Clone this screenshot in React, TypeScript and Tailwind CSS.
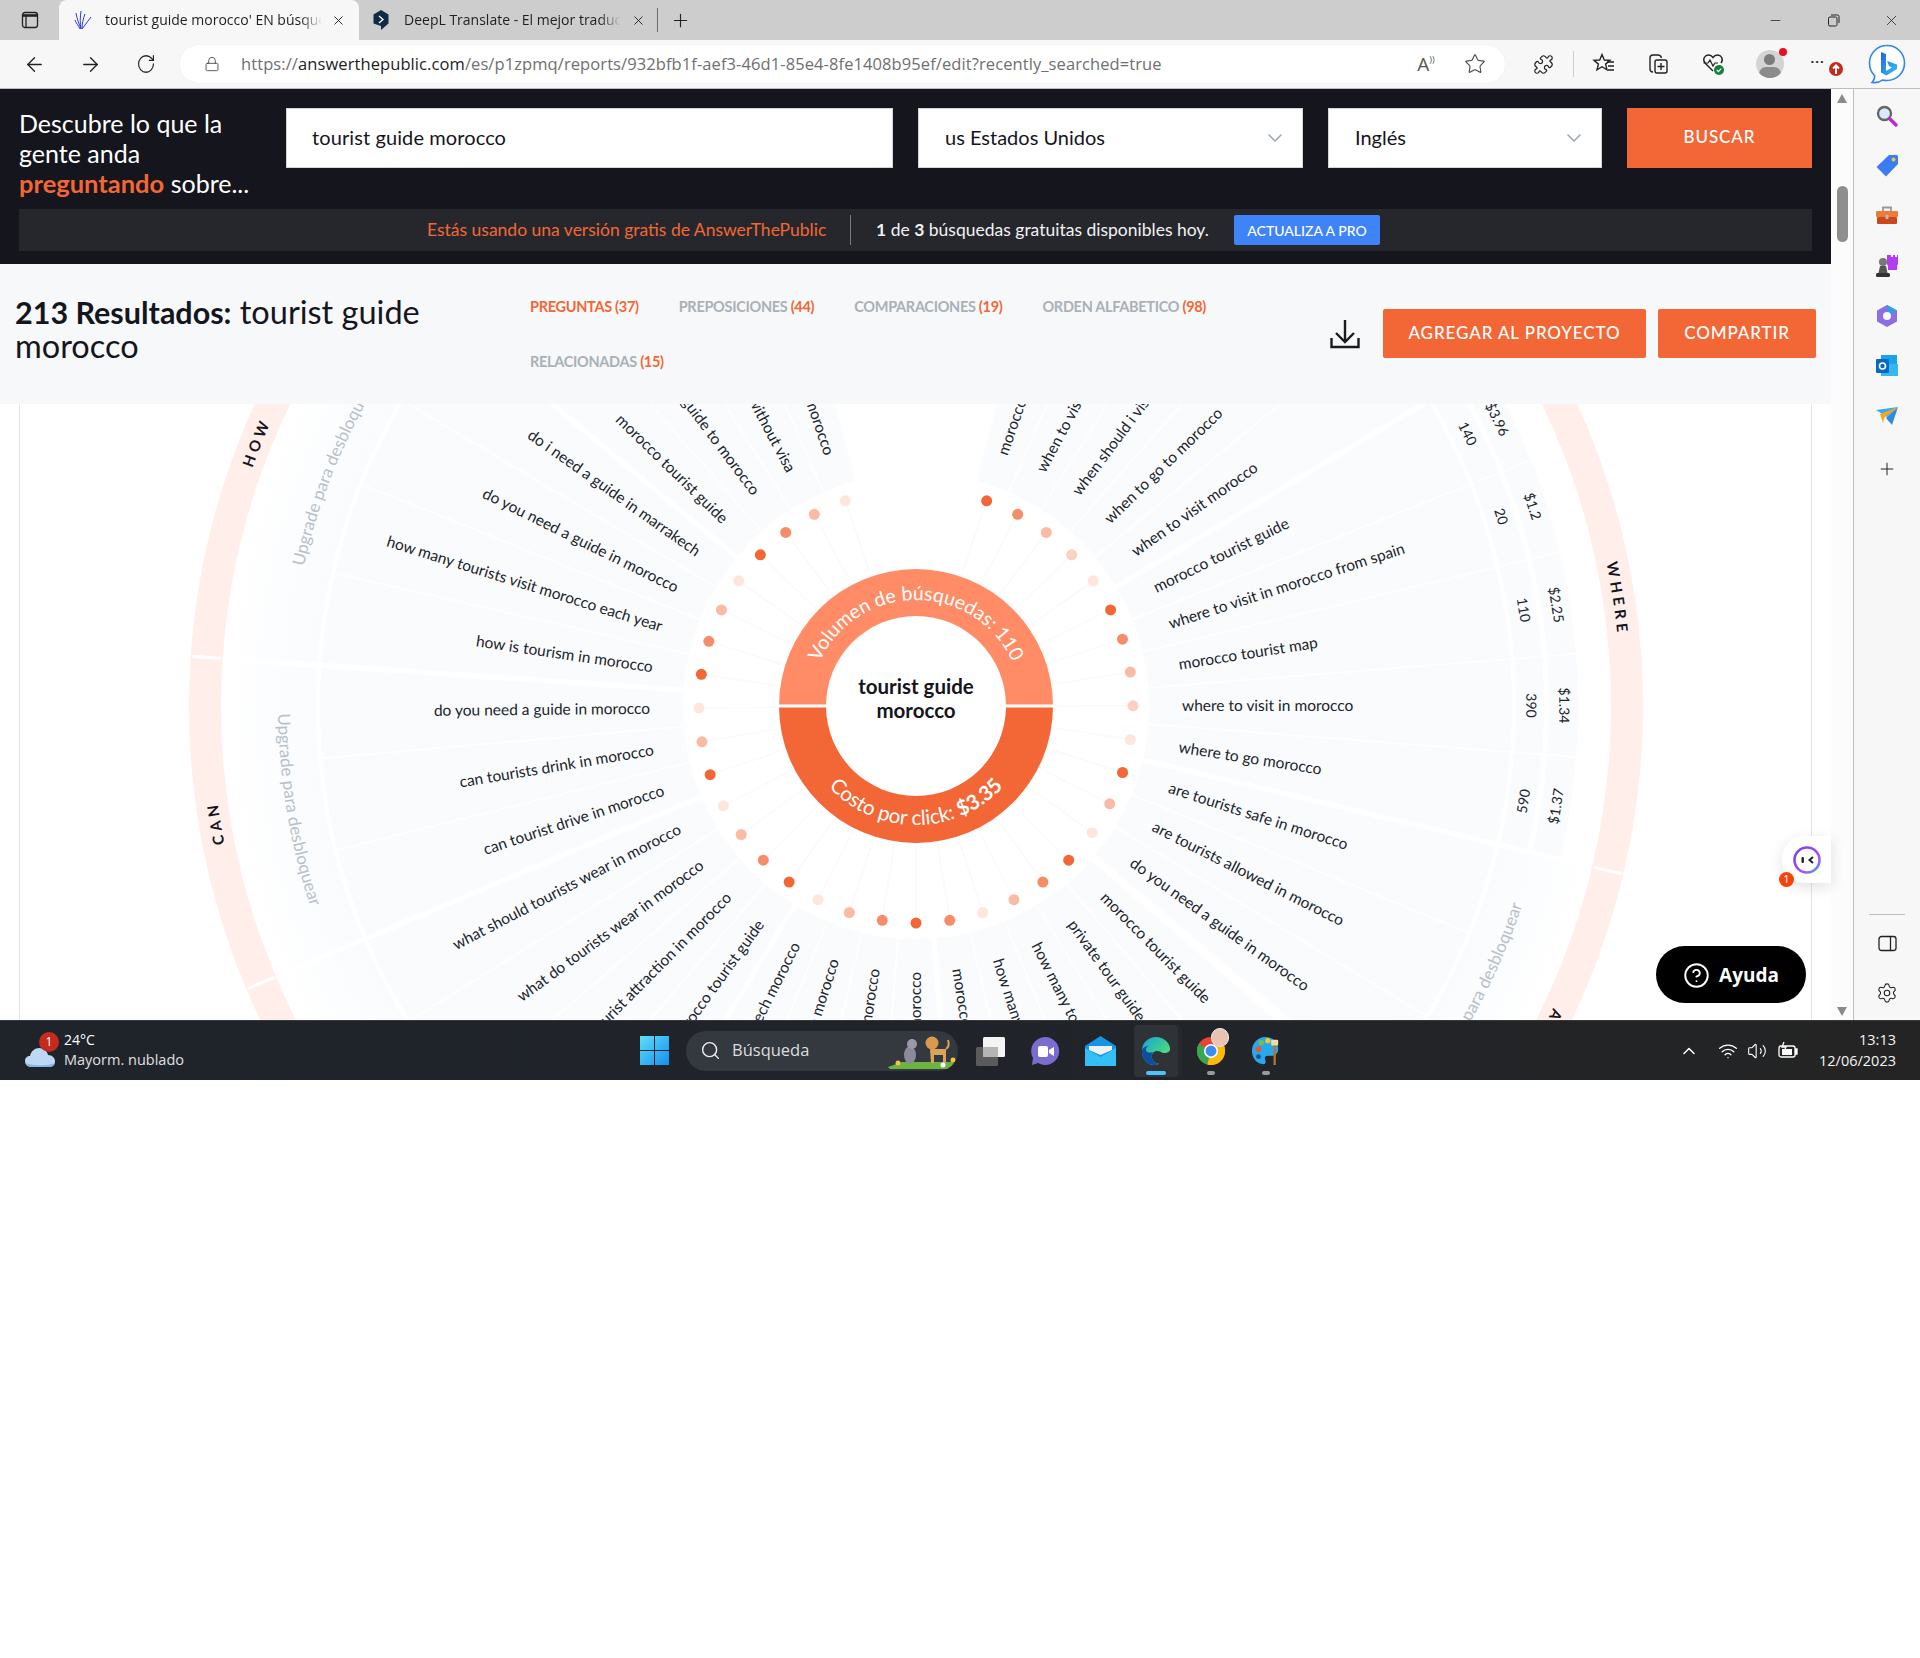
import React from "react";
import { ArrowLeft, ArrowRight, RotateCw, Lock, Star, Puzzle, Plus, Minus, X, ChevronDown, ChevronUp, Search, Settings, Wifi, Volume2, CircleHelp } from "lucide-react";

const CX = 916;
const CY = 706;
const STEP = 322 / 36;
const ang = (i: number) => 19 + i * STEP + (i >= 6 && i <= 12 ? -0.6 : 0);
const pt = (r: number, a: number): [number, number] => {
  const t = (a * Math.PI) / 180;
  return [CX + r * Math.sin(t), CY - r * Math.cos(t)];
};
const sector = (r0: number, r1: number, a0: number, a1: number) => {
  const [x0, y0] = pt(r1, a0);
  const [x1, y1] = pt(r1, a1);
  const [x2, y2] = pt(r0, a1);
  const [x3, y3] = pt(r0, a0);
  const l = a1 - a0 > 180 ? 1 : 0;
  return `M${x0} ${y0}A${r1} ${r1} 0 ${l} 1 ${x1} ${y1}L${x2} ${y2}A${r0} ${r0} 0 ${l} 0 ${x3} ${y3}Z`;
};
const arc = (r: number, a0: number, a1: number) => {
  const [x0, y0] = pt(r, a0);
  const [x1, y1] = pt(r, a1);
  const sweep = a1 > a0 ? 1 : 0;
  const l = Math.abs(a1 - a0) > 180 ? 1 : 0;
  return `M${x0} ${y0}A${r} ${r} 0 ${l} ${sweep} ${x1} ${y1}`;
};

const S = "#f26735";
const M = "#f68d69";
const L = "#fbbaa4";
const LL = "#fdd0c1";
const V = "#fee6dd";
const dotColors = [S, M, L, LL, V, S, M, L, LL, V, S, L, V, S, M, L, V, M, S, M, L, V, S, M, L, V, S, L, V, S, M, L, V, S, M, L, V];
const questions = [
  "morocco tourist guide", "when to visit morocco in", "when should i visit morocco", "when to go to morocco", "when to visit morocco",
  "morocco tourist guide", "where to visit in morocco from spain", "morocco tourist map", "where to visit in morocco", "where to go morocco",
  "are tourists safe in morocco", "are tourists allowed in morocco", "do you need a guide in morocco",
  "morocco tourist guide", "private tour guide morocco", "how many tourists visit morocco", "how many tourists go to morocco", "morocco tourist",
  "tour guide morocco", "guide in morocco", "tourist guide morocco", "guide in marrakech morocco",
  "morocco tourist guide", "tourist attraction in morocco", "what do tourists wear in morocco", "what should tourists wear in morocco",
  "can tourist drive in morocco", "can tourists drink in morocco", "do you need a guide in morocco",
  "how is tourism in morocco", "how many tourists visit morocco each year", "do you need a guide in morocco", "do i need a guide in marrakech",
  "morocco tourist guide", "tourist guide to morocco", "travel to morocco without visa", "tourist guide morocco",
];
const groups: [number, number][] = [[0, 4], [5, 9], [10, 12], [13, 17], [18, 21], [22, 25], [26, 28], [29, 32], [33, 36]];
const cells: Record<number, [string, string]> = { 5: ["140", "$3.96"], 6: ["20", "$1.2"], 7: ["110", "$2.25"], 8: ["390", "$1.34"], 9: ["590", "$1.37"] };
const ringLabels: [string, number][] = [["WHERE", 81.3], ["ARE", 117], ["HOW", 291.8], ["CAN", 260.5]];
const upgrades: [number, boolean][] = [[117, true], [260.5, true], [291.8, false]];

function Wheel() {
  const edge = (g: [number, number]): [number, number] => [ang(g[0]) - STEP / 2, ang(g[1]) + STEP / 2];
  return (
    <svg viewBox="20 404 1791 616" className="block w-full h-full font-['Lato',sans-serif]">
      <defs>
        <radialGradient id="fade" gradientUnits="userSpaceOnUse" cx={CX} cy={CY} r={690}>
          <stop offset="0.86" stopColor="#f9fbfd" />
          <stop offset="0.94" stopColor="#fcfdfe" />
          <stop offset="1" stopColor="#ffffff" />
        </radialGradient>
      </defs>
      {groups.map((g, k) => {
        const [a0, a1] = edge(g);
        return (
          <g key={k}>
            <path d={sector(695, 727, a0, a1)} fill="#ffeee9" />
            <path d={sector(233, 596, a0, a1)} fill="#f9fbfd" />
            {k === 1 ? (
              <g>
                <path d={sector(600, 628, a0, a1)} fill="#f9fbfd" />
                <path d={sector(633, 662, a0, a1)} fill="#f9fbfd" />
              </g>
            ) : (
              <path d={sector(600, 690, a0, a1)} fill="url(#fade)" />
            )}
          </g>
        );
      })}
      {questions.map((_, i) => {
        if (i === 36) return null;
        const a = ang(i) + STEP / 2;
        const [x0, y0] = pt(233, a);
        const [x1, y1] = pt(i >= 5 && i <= 8 ? 662 : 596, a);
        return <line key={i} x1={x0} y1={y0} x2={x1} y2={y1} stroke="#ffffff" strokeWidth={1.5} />;
      })}
      {groups.map((g, k) => {
        const [a0, a1] = edge(g);
        return (
          <g key={k}>
            {[a0, a1].map((a, j) => {
              const [x0, y0] = pt(233, a);
              const [x1, y1] = pt(690, a);
              const [x2, y2] = pt(698, a);
              const [x3, y3] = pt(724, a);
              return (
                <g key={j}>
                  <line x1={x0} y1={y0} x2={x1} y2={y1} stroke="#ffffff" strokeWidth={5} />
                  <line x1={x2} y1={y2} x2={x3} y2={y3} stroke="#ffffff" strokeWidth={3} strokeLinecap="round" />
                </g>
              );
            })}
          </g>
        );
      })}
      {questions.map((q, i) => {
        const a = ang(i);
        const right = a < 179.9;
        const [x0, y0] = pt(137, a);
        const [x1, y1] = pt(217, a);
        const [tx, ty] = pt(266, a);
        return (
          <g key={i}>
            <line x1={x0} y1={y0} x2={x1} y2={y1} stroke="#fafafb" strokeWidth={1.5} />
            <circle cx={x1} cy={y1} r={5.5} fill={dotColors[i]} />
            <text
              x={tx}
              y={ty}
              dy="0.34em"
              textAnchor={right ? "start" : "end"}
              transform={`rotate(${right ? a - 90 : a + 90} ${tx} ${ty})`}
              fontSize={15.5}
              fill="#20232a"
            >
              {q}
            </text>
          </g>
        );
      })}
      {Object.keys(cells).map((k) => {
        const i = Number(k);
        const a = ang(i);
        const rot = a <= 90.5 ? a : a - 180;
        const [x0, y0] = pt(615, a);
        const [x1, y1] = pt(648, a);
        return (
          <g key={k} fontSize={14} fill="#20232a" textAnchor="middle">
            <text x={x0} y={y0} dy="0.34em" transform={`rotate(${rot} ${x0} ${y0})`}>{cells[i][0]}</text>
            <text x={x1} y={y1} dy="0.34em" transform={`rotate(${rot} ${x1} ${y1})`}>{cells[i][1]}</text>
          </g>
        );
      })}
      {ringLabels.map(([t, a], k) => {
        const d = arc(705, a - 12, a + 12);
        return (
          <g key={k}>
            <path id={`rl${k}`} d={d} fill="none" />
            <text fontSize={15} fontWeight={700} letterSpacing="4" fill="#14151d" textAnchor="middle">
              <textPath href={`#rl${k}`} startOffset="50%">{t}</textPath>
            </text>
          </g>
        );
      })}
      {upgrades.map(([a, ccw], k) => {
        const d = ccw ? arc(638, a + 14, a - 14) : arc(628, a - 14, a + 14);
        return (
          <g key={k}>
            <path id={`up${k}`} d={d} fill="none" />
            <text fontSize={17} fill="#b6c0c9" textAnchor="middle">
              <textPath href={`#up${k}`} startOffset="50%">Upgrade para desbloquear</textPath>
            </text>
          </g>
        );
      })}
      <path d={sector(90, 137, -90, 90)} fill="#ff8c66" />
      <path d={sector(90, 137, 90, 270)} fill="#f26735" />
      <rect x={CX - 140} y={CY - 1.5} width={280} height={3} fill="#ffffff" />
      <path id="hubTop" d={arc(106, -80, 80)} fill="none" />
      <text fontSize={19.5} fill="#ffffff" textAnchor="middle">
        <textPath href="#hubTop" startOffset="50%">Volumen de búsquedas: 110</textPath>
      </text>
      <path id="hubBot" d={arc(119, 260, 100)} fill="none" />
      <text fontSize={20.5} fill="#ffffff" textAnchor="middle">
        <textPath href="#hubBot" startOffset="50%">Costo por click: <tspan fontWeight={700}>$3.35</tspan></textPath>
      </text>
      <text x={CX} y={694} textAnchor="middle" fontSize={20.5} fontWeight={700} fill="#14151d">tourist guide</text>
      <text x={CX} y={718} textAnchor="middle" fontSize={20.5} fontWeight={700} fill="#14151d">morocco</text>
    </svg>
  );
}

function Bing() {
  return (
    <svg width="38" height="40" viewBox="0 0 38 40">
      <defs>
        <linearGradient id="bg" x1="0" y1="0" x2="1" y2="1">
          <stop offset="0" stopColor="#1b66e0" />
          <stop offset="1" stopColor="#37c6e8" />
        </linearGradient>
      </defs>
      <path d="M19 1.5C9 1.5 1.5 9.5 1.5 19c0 5 2 9.5 5 12.5.5 2.5-.5 5-2.500 7 4 .5 8-.5 10.500-2.500 1.500.5 3 .5 4.500.5 10 0 17.500-8 17.500-17.500S29 1.500 19 1.500z" fill="#fff" stroke="#2f86e8" strokeWidth="1.6" />
      <path d="M13 8l5 2v17l6-3.500-3-1.500-2-5 10 3.500v4.500l-10.500 6.500L13 28.500z" fill="url(#bg)" />
    </svg>
  );
}

function Edge({ size = 30 }: { size?: number }) {
  return (
    <svg width={size} height={size} viewBox="0 0 32 32">
      <defs>
        <linearGradient id="eg" x1="0" y1="0" x2="1" y2="1">
          <stop offset="0" stopColor="#1ba1e2" />
          <stop offset="0.55" stopColor="#3bcf8e" />
          <stop offset="1" stopColor="#8ee36b" />
        </linearGradient>
      </defs>
      <path d="M16 1C7 1 1 8 1 16c0 8 5.500 15 13 15 2 0 4-.5 5.500-1.500-4 0-8-3-8-7.500 0-3.500 2.500-6 5.500-6 3.500 0 5 1.500 6.500 2 2 .5 7.500-.5 7.500-4C31 7 24 1 16 1z" fill="url(#eg)" />
      <path d="M1 16c0 8 5.500 15 13 15 2 0 4-.5 5.500-1.500-4 0-8-3-8-7.500 0-2.500 1-4 2.500-5-1 .5-4 1-6 .5C5 16.500 4 13 8 10c-4 1-7 3-7 6z" fill="#0b4f9e" />
    </svg>
  );
}

function Chrome() {
  return (
    <svg width="30" height="30" viewBox="0 0 32 32">
      <circle cx="16" cy="16" r="15" fill="#ea4335" />
      <path d="M16 16L3 8.500A15 15 0 0 0 12 30.500z" fill="#34a853" />
      <path d="M16 16L12 30.500A15 15 0 0 0 31 16l-.5-5H16z" fill="#fbbc05" />
      <circle cx="16" cy="16" r="7.500" fill="#fff" />
      <circle cx="16" cy="16" r="5.800" fill="#3f8cf0" />
    </svg>
  );
}

function Paint() {
  return (
    <svg width="30" height="32" viewBox="0 0 32 34">
      <path d="M15 2C7 2 1 9 1 17c0 8 6 14 12 14 3 0 3-3 2-5-1-3 1-4 3-4h4c4 0 7-3 7-7 0-7-6-13-14-13z" fill="#2aa9ea" />
      <circle cx="8" cy="15" r="3" fill="#e8553a" />
      <circle cx="11" cy="8" r="2.800" fill="#7ac143" />
      <circle cx="18" cy="6" r="2.800" fill="#f9c22e" />
      <circle cx="8" cy="23" r="2.600" fill="#234c8f" />
      <rect x="24" y="10" width="2.500" height="22" fill="#b5702c" />
      <rect x="21.500" y="5" width="7.500" height="6" rx="1" fill="#f3d9a4" />
    </svg>
  );
}

function Tool({ w, children }: { w: string; children: React.ReactNode }) {
  return <div className={`flex items-center justify-center h-full shrink-0 ${w}`}>{children}</div>;
}

function TopChrome() {
  return (
    <div className="font-['Open_Sans',sans-serif]">
      <div className="flex h-10 bg-[#cdcdcd] items-end">
        <div className="w-[59px] h-10 flex items-center justify-center">
          <svg width="18" height="18" viewBox="0 0 18 18" fill="none" stroke="#222" strokeWidth="1.300">
            <rect x="1.500" y="1.500" width="15" height="15" rx="2.500" />
            <path d="M1.500 4.500h15" strokeWidth="2.600" />
            <path d="M5 4.500v12" />
          </svg>
        </div>
        <div className="w-[300px] h-10 bg-[#f7f7f7] rounded-t-lg flex items-center pl-[15px]">
          <svg width="18" height="20" viewBox="0 0 18 20" fill="none" stroke="#2e3bd8" strokeWidth="1">
            <path d="M7 19C5 14 3 9 2 3M7 19C6 13 6 8 7 1M8 19C8 14 9 9 11 4M8 19C11 15 14 11 17 7M6 19C4 15 2 13 1 10" />
          </svg>
          <span className="ml-[13px] w-[217px] overflow-hidden whitespace-nowrap text-[14px] leading-[18px] -mt-[1px] text-[#1f1f1f] [mask-image:linear-gradient(to_right,black_90%,transparent)]">tourist guide morocco' EN búsqueda</span>
          <X size={15} strokeWidth={1.500} className="ml-[9px] text-[#222]" />
        </div>
        <div className="w-[298px] h-10 flex items-center pl-[13px]">
          <svg width="18" height="22" viewBox="0 0 18 22">
            <path d="M9 1l7.500 4.500v9L9 21v-4L1.500 14.500v-9z" fill="#0f2b46" />
            <path d="M7 7l4 3.500L7 14" stroke="#fff" strokeWidth="1.300" fill="none" />
          </svg>
          <span className="ml-[14px] w-[217px] overflow-hidden whitespace-nowrap text-[14px] leading-[18px] -mt-[1px] text-[#1f1f1f] [mask-image:linear-gradient(to_right,black_90%,transparent)]">DeepL Translate - El mejor traductor</span>
          <X size={15} strokeWidth={1.500} className="ml-[10px] text-[#222]" />
        </div>
        <div className="h-[24px] w-px bg-[#6b6b6b] self-center" />
        <div className="w-[44px] h-10 flex items-center justify-center">
          <Plus size={21} strokeWidth={1.300} className="text-[#222]" />
        </div>
        <div className="ml-auto flex h-10 items-center text-[#222]">
          <Tool w="w-[57px]"><Minus size={15} strokeWidth={1.200} /></Tool>
          <Tool w="w-[58px]">
            <svg width="13" height="13" viewBox="0 0 13 13" fill="none" stroke="#222">
              <rect x="1.500" y="3" width="8.500" height="9" rx="1.500" />
              <path d="M4 1h6.500a1.500 1.500 0 0 1 1.500 1.500V9" />
            </svg>
          </Tool>
          <Tool w="w-[58px]"><X size={17} strokeWidth={1.100} /></Tool>
        </div>
      </div>
      <div className="flex h-[49px] bg-[#f7f7f7] border-b border-[#bdbdbd] items-center text-[#222]">
        <Tool w="w-[63px] pl-[6px]"><ArrowLeft size={23} strokeWidth={1.400} /></Tool>
        <Tool w="w-[55px]"><ArrowRight size={23} strokeWidth={1.400} /></Tool>
        <Tool w="w-[55px]"><RotateCw size={22} strokeWidth={1.400} className="scale-x-90" /></Tool>
        <div className="ml-[7px] w-[1325px] h-[38px] rounded-full bg-white flex items-center shadow-[0_0_2px_rgba(0,0,0,0.05)]">
          <Lock size={16} strokeWidth={1.300} className="ml-[24px] text-[#444]" />
          <span className="ml-[21px] text-[16.500px] tracking-[0.090px] whitespace-nowrap text-[#6f6f6f] w-[1090px]">
            https://<span className="text-[#1c1c1c]">answerthepublic.com</span>/es/p1zpmq/reports/932bfb1f-aef3-46d1-85e4-8fe1408b95ef/edit?recently_searched=true
          </span>
          <div className="flex items-center w-[50px] justify-center ml-[70px] text-[#555] text-[19px]">
            A<span className="text-[9px] -mt-2">))</span>
          </div>
          <Star size={22} strokeWidth={1.200} className="ml-[13px] text-[#444]" />
        </div>
        <Tool w="w-[55px] ml-[11px]"><Puzzle size={21} strokeWidth={1.400} /></Tool>
        <div className="w-px h-[26px] bg-[#ccc] ml-[2px]" />
        <Tool w="w-[59px]">
          <svg width="24" height="24" viewBox="0 0 24 24" fill="none" stroke="#222" strokeWidth="1.400">
            <path d="M10 2.500l2.300 5.500 5.700.4-4.400 3.700 1.400 5.700-5-3.100-5 3.100 1.400-5.700L2 8.400l5.700-.4z" />
            <path d="M15 10h7M16 14h6M16 18h6" />
          </svg>
        </Tool>
        <Tool w="w-[50px]">
          <svg width="24" height="24" viewBox="0 0 24 24" fill="none" stroke="#222" strokeWidth="1.400">
            <path d="M7 20c-2 0-3-1.500-3-3V6c0-2 1.500-3 3-3h5c2 0 3 1 3.500 3" />
            <rect x="9" y="8" width="12" height="13" rx="2" />
            <path d="M15 11v7M11.500 14.500h7" />
          </svg>
        </Tool>
        <Tool w="w-[59px]">
          <svg width="24" height="24" viewBox="0 0 24 24" fill="none">
            <path d="M12 19L4 11C1 7 4 3 7.500 3c2 0 3.500 1 4.500 2.500C13 4 14.500 3 16.500 3 20 3 23 7 20 11" stroke="#222" strokeWidth="1.400" />
            <path d="M2.500 11H7l2-3 3 6 2-3h3" stroke="#222" strokeWidth="1.200" />
            <circle cx="18" cy="18" r="5" fill="#15803d" />
            <path d="M15.800 18l1.600 1.600 2.800-3" stroke="#fff" strokeWidth="1.200" />
          </svg>
        </Tool>
        <Tool w="w-[55px]">
          <div className="relative w-[28px] h-[28px]">
            <div className="w-[28px] h-[28px] rounded-full bg-[#d4d4d4] overflow-hidden flex flex-col items-center">
              <div className="w-[11px] h-[11px] rounded-full bg-[#7c7c7c] mt-[4px] shrink-0" />
              <div className="w-[22px] h-[14px] rounded-full bg-[#8c8c8c] mt-[2px] shrink-0" />
            </div>
            <div className="absolute -top-[2px] -right-[3px] w-[8px] h-[8px] rounded-full bg-[#e81123]" />
          </div>
        </Tool>
        <Tool w="w-[57px]">
          <div className="relative w-[32px] h-[24px]">
            <span className="absolute left-[1px] top-[-3px] text-[#222] font-bold tracking-[1px] text-[13px]">...</span>
            <div className="absolute right-[-1px] bottom-0 w-[14px] h-[14px] rounded-full bg-[#c42b1c] flex items-center justify-center">
              <svg width="8" height="10" viewBox="0 0 8 10" fill="none" stroke="#fff" strokeWidth="2"><path d="M4 10V2M1 4.500L4 1.500l3 3" /></svg>
            </div>
          </div>
        </Tool>
        <Tool w="w-[66px]"><Bing /></Tool>
      </div>
    </div>
  );
}

function Sidebar() {
  return (
    <div className="w-[66px] bg-[#f7f7f7] flex flex-col items-center shrink-0 pt-[15px]">
      <div className="flex flex-col items-center gap-[26px]">
        <svg width="24" height="24" viewBox="0 0 24 24" fill="none">
          <circle cx="9.500" cy="9.500" r="6.500" fill="#dbeafe" stroke="#666" strokeWidth="2.400" />
          <path d="M15 15l6 6" stroke="#c026d3" strokeWidth="3.400" strokeLinecap="round" />
        </svg>
        <svg width="24" height="24" viewBox="0 0 24 24">
          <path d="M14 1h7.500A1.500 1.500 0 0 1 23 2.500V10L11 22.500 1.500 13z" fill="#3b7cf5" />
          <circle cx="18.500" cy="5.500" r="2" fill="#f5c542" />
        </svg>
        <svg width="24" height="24" viewBox="0 0 24 24">
          <path d="M8 7V3.500h8V7" fill="none" stroke="#999" strokeWidth="1.800" />
          <rect x="1" y="7" width="22" height="6" rx="1" fill="#ee7b3a" />
          <rect x="2" y="13" width="20" height="7" rx="1" fill="#c9491a" />
          <rect x="10.500" y="11" width="3" height="4" fill="#bbb" />
        </svg>
        <svg width="24" height="24" viewBox="0 0 24 24">
          <path d="M14 1h2v2h2V1h2v2h2V1h1v9l-1 2v4h-9v-4l-1-2V1z" fill="#b33cf0" />
          <circle cx="8" cy="8" r="4" fill="#777" />
          <path d="M5 12h6l1.500 7h-9z" fill="#555" />
          <rect x="1" y="19" width="14" height="4" rx="1.500" fill="#333" />
        </svg>
        <svg width="24" height="24" viewBox="0 0 24 24">
          <path d="M12 1l10 5.500v11L12 23 2 17.500v-11z" fill="#8d6ee0" />
          <path d="M12 1l10 5.500-5 3.500-5-3z" fill="#2f9ee6" />
          <circle cx="12" cy="12" r="4" fill="#f7f7f7" />
        </svg>
        <svg width="24" height="24" viewBox="0 0 24 24">
          <rect x="6" y="1" width="16" height="10" fill="#1aa3e8" />
          <rect x="6" y="10" width="17" height="12" fill="#35b8f0" />
          <rect x="1" y="5" width="13" height="14" rx="1" fill="#0868c4" />
          <circle cx="7.500" cy="12" r="3" fill="none" stroke="#fff" strokeWidth="1.600" />
        </svg>
        <svg width="24" height="24" viewBox="0 0 24 24">
          <path d="M1 6l22-3-11 10z" fill="#38a9f0" />
          <path d="M23 3l-6 18-6-7z" fill="#2d8be0" />
          <path d="M5 10l18-7-14 11-1 5z" fill="#f5a623" />
        </svg>
        <Plus size={20} strokeWidth={1.200} className="text-[#222] mt-[5px]" />
      </div>
      <div className="mt-auto w-[36px] h-px bg-[#bdbdbd]" />
      <svg className="mt-[20px]" width="19" height="17" viewBox="0 0 19 17" fill="none" stroke="#222" strokeWidth="1.300">
        <rect x="1" y="1.500" width="17" height="14" rx="2.500" />
        <path d="M12.500 1.500v14" />
      </svg>
      <Settings size={22} strokeWidth={1.200} className="mt-[30px] mb-[16px] text-[#222]" />
    </div>
  );
}

function Scrollbar() {
  return (
    <div className="w-[22px] bg-[#fcfcfc] flex flex-col items-center shrink-0 pt-[5px] pb-[4px]">
      <div className="w-0 h-0 border-x-[5px] border-x-transparent border-b-[9px] border-b-[#8a8a8a]" />
      <div className="w-[11px] h-[56px] rounded-full bg-[#8e8e8e] mt-[83px]" />
      <div className="mt-auto w-0 h-0 border-x-[5px] border-x-transparent border-t-[9px] border-t-[#8a8a8a]" />
    </div>
  );
}

function Header() {
  const box = "h-[60px] bg-white border border-[#d4d4d4] flex items-center text-[20px] text-[#14151d] shrink-0";
  return (
    <div className="h-[175px] bg-[#14151d] px-[19px] pt-[19px] font-['Lato',sans-serif]">
      <div className="flex items-start h-[91px]">
        <div className="w-[267px] text-[25px] leading-[30px] text-white shrink-0">
          Descubre lo que la<br />gente anda<br /><span className="font-bold text-[#f26735] text-[25.500px]">preguntando</span> sobre...
        </div>
        <div className={`${box} w-[607px] pl-[25px] pb-[2px] tracking-[0.100px]`}>tourist guide morocco</div>
        <div className={`${box} ml-[25px] w-[385px] pl-[26px] pr-[15px] justify-between`}>
          <span className="-mt-[2px]">us Estados Unidos</span><ChevronDown size={24} strokeWidth={1.500} className="text-[#9aa5ab]" />
        </div>
        <div className={`${box} ml-[25px] w-[274px] pl-[26px] pr-[15px] justify-between`}>
          <span className="-mt-[2px]">Inglés</span><ChevronDown size={24} strokeWidth={1.500} className="text-[#9aa5ab]" />
        </div>
        <div className="ml-[25px] w-[185px] h-[60px] bg-[#f26735] flex items-center justify-center text-white text-[17px] font-medium tracking-[0.900px] shrink-0 pb-[2px]">BUSCAR</div>
      </div>
      <div className="mt-[10px] h-[42px] w-[1793px] bg-[#26272c] flex items-center pl-[408px]">
        <span className="text-[#f26735] text-[17.500px] w-[397px] whitespace-nowrap">Estás usando una versión gratis de AnswerThePublic</span>
        <div className="ml-[26px] w-px h-[30px] bg-[#7b7b7b]" />
        <span className="ml-[25px] text-[#f2f2f2] text-[17.500px] w-[333px] whitespace-nowrap"><b>1</b> de <b>3</b> búsquedas gratuitas disponibles hoy.</span>
        <div className="ml-[25px] w-[146px] h-[30px] bg-[#3f83f8] rounded-[2px] flex items-center justify-center text-white text-[14px] font-medium">ACTUALIZA A PRO</div>
      </div>
    </div>
  );
}

function Results() {
  const tab = "text-[14.500px] font-bold tracking-[-0.300px] whitespace-nowrap text-[#a9b1b6]";
  const n = "text-[#f26735]";
  return (
    <div className="h-[140px] bg-[#f7f8fa] flex font-['Lato',sans-serif]">
      <div className="w-[530px] pl-[15px] pt-[31px] text-[32.500px] leading-[34px] text-[#14151d] shrink-0">
        <span className="font-bold text-[30.500px]">213 Resultados:</span> tourist guide<br />morocco
      </div>
      <div className="w-[700px] pt-[32px] flex flex-wrap gap-x-[40px] gap-y-[33px] content-start">
        <span className={`${tab} ${n}`}>PREGUNTAS (37)</span>
        <span className={tab}>PREPOSICIONES <span className={n}>(44)</span></span>
        <span className={tab}>COMPARACIONES <span className={n}>(19)</span></span>
        <span className={tab}>ORDEN ALFABETICO <span className={n}>(98)</span></span>
        <span className={tab}>RELACIONADAS <span className={n}>(15)</span></span>
      </div>
      <div className="flex-1 flex items-start justify-end pt-[45px] pr-[15px]">
        <svg className="mt-[10px] mr-[23px]" width="30" height="30" viewBox="0 0 30 30" fill="none" stroke="#1c1c1c" strokeWidth="2.400">
          <path d="M15 1v21M6 14l9 9 9-9" />
          <path d="M1.500 19v9h27v-9" />
        </svg>
        <div className="w-[263px] h-[49px] bg-[#f26735] rounded-[2px] flex items-center justify-center text-white text-[17px] font-medium tracking-[0.900px] pb-[1px]">AGREGAR AL PROYECTO</div>
        <div className="ml-[12px] w-[158px] h-[49px] bg-[#f26735] rounded-[2px] flex items-center justify-center text-white text-[17px] font-medium tracking-[0.900px] pb-[1px]">COMPARTIR</div>
      </div>
    </div>
  );
}

function Overlays() {
  return (
    <>
      <div className="absolute left-[1782px] top-[747px] w-[49px] h-[47px] bg-white rounded-l-[22px] shadow-[0_4px_14px_rgba(0,0,0,0.12)] flex items-center pl-[11px]">
        <svg width="28" height="28" viewBox="0 0 28 28">
          <defs>
            <linearGradient id="rb" x1="0" y1="0" x2="1" y2="1">
              <stop offset="0" stopColor="#7c3aed" />
              <stop offset="0.7" stopColor="#a855f7" />
              <stop offset="1" stopColor="#22b8e6" />
            </linearGradient>
          </defs>
          <circle cx="14" cy="14" r="12.500" fill="#fff" stroke="url(#rb)" strokeWidth="2.600" />
          <rect x="8.500" y="11" width="2.400" height="6" rx="1" fill="#222" />
          <path d="M20 11l-3.500 3 3.500 3" fill="none" stroke="#222" strokeWidth="2" />
        </svg>
      </div>
      <div className="absolute left-[1779px] top-[783px] w-[15px] h-[15px] rounded-full bg-[#f8420b] text-white text-[11px] flex items-center justify-center font-['Open_Sans',sans-serif]">1</div>
      <div className="absolute left-[1656px] top-[857px] w-[150px] h-[57px] rounded-full bg-black flex items-center justify-center text-white text-[19px] font-bold gap-[9px] pt-[1px] font-['Open_Sans',sans-serif]">
        <CircleHelp size={27} strokeWidth={1.700} />Ayuda
      </div>
    </>
  );
}

function Taskbar() {
  return (
    <div className="h-[60px] bg-gradient-to-r from-[#1f232a] via-[#20242a] to-[#242424] border-t border-[#3a3a3a] flex items-center text-white font-['Open_Sans',sans-serif] shrink-0">
      <div className="w-[640px] flex items-center shrink-0 pl-[24px]">
        <div className="relative w-[40px] h-[36px]">
          <svg className="absolute left-0 bottom-0" width="34" height="26" viewBox="0 0 34 26">
            <path d="M8 24C3 24 1 21 1 18c0-3 2-5 5-5 1-5 5-8 9-8 5 0 8 3 9 7 4 0 7 3 7 6s-2 6-6 6z" fill="#bcd8f5" />
            <path d="M2 20c4 3 24 3 29 0-1 3-3 4-6 4H8c-3 0-5-1-6-4z" fill="#86b5e8" />
          </svg>
          <div className="absolute left-[15px] top-[-1px] w-[20px] h-[20px] rounded-full bg-[#c42b1c] text-[12px] flex items-center justify-center">1</div>
        </div>
        <div className="text-[14.500px] leading-[20px] -mt-[2px]">
          <div className="text-[14px]">24°C</div>
          <div className="text-[#e0e0e0]">Mayorm. nublado</div>
        </div>
      </div>
      <svg width="29" height="29" viewBox="0 0 29 29" className="shrink-0">
        <defs>
          <linearGradient id="wn" x1="0" y1="0" x2="1" y2="1">
            <stop offset="0" stopColor="#5fe0fb" />
            <stop offset="1" stopColor="#118fed" />
          </linearGradient>
        </defs>
        <path d="M0 0h14v14H0zM15 0h14v14H15zM0 15h14v14H0zM15 15h14v14H15z" fill="url(#wn)" />
      </svg>
      <div className="ml-[17px] w-[272px] h-[40px] rounded-full bg-[#34383f] flex items-center pl-[14px] shrink-0 relative overflow-hidden">
        <Search size={21} strokeWidth={1.600} className="text-[#f0f0f0]" />
        <span className="ml-[11px] text-[16.500px] text-[#dedede]">Búsqueda</span>
        <svg className="ml-auto mr-[2px]" width="68" height="36" viewBox="0 0 68 36">
          <path d="M0 34l14-5h50l4 2-8 5H2z" fill="#6cb33f" />
          <ellipse cx="22" cy="22" rx="6" ry="9" fill="#8a8a9a" />
          <circle cx="24" cy="11" r="5" fill="#9a9aa8" />
          <path d="M42 16h16v14h-3v-8h-9v8h-3z" fill="#dba25a" />
          <circle cx="44" cy="10" r="6.500" fill="#d99a4e" />
          <path d="M58 16c3-2 3-6 2-9" stroke="#dba25a" strokeWidth="2" fill="none" />
          <circle cx="10" cy="30" r="2.500" fill="#f5c542" />
          <circle cx="55" cy="32" r="2.500" fill="#fff" />
          <circle cx="65" cy="27" r="2.500" fill="#f5c542" />
        </svg>
      </div>
      <div className="flex items-center ml-[16px] shrink-0">
        <Tool w="w-[32px]">
          <svg width="30" height="30" viewBox="0 0 30 30">
            <rect x="1" y="11" width="22" height="19" rx="1.500" fill="#5b5b5b" />
            <rect x="8" y="1" width="22" height="20" rx="1.500" fill="#f4f4f4" />
            <rect x="8" y="11" width="15" height="10" fill="#b5b5b5" />
          </svg>
        </Tool>
        <Tool w="w-[30px] ml-[24px]">
          <svg width="30" height="30" viewBox="0 0 30 30">
            <path d="M15 1a14 14 0 1 1-7 26l-6 2 1-7A14 14 0 0 1 15 1z" fill="#7b6ccf" />
            <rect x="8" y="10" width="10" height="11" rx="2" fill="#fff" />
            <path d="M19 14l5-3v9l-5-3z" fill="#fff" />
          </svg>
        </Tool>
        <Tool w="w-[31px] ml-[25px]">
          <svg width="31" height="30" viewBox="0 0 31 30">
            <path d="M15.500 0L31 10v20H0V10z" fill="#1595e5" />
            <path d="M4 10h23v4L15.500 19 4 14z" fill="#eef2f5" />
            <path d="M0 12l15.500 9L31 12v18H0z" fill="#34c0f5" />
          </svg>
        </Tool>
        <div className="relative ml-[18px] w-[44px] h-[52px] rounded-[4px] bg-[#2f3236] shadow-[4px_0_0_#26282b] flex items-center justify-center">
          <Edge />
          <div className="absolute bottom-[2px] left-[12px] w-[20px] h-[4px] rounded-full bg-[#4cc2ff]" />
        </div>
        <div className="relative ml-[15px] w-[36px] h-[52px] flex items-center justify-center">
          <Chrome />
          <div className="absolute right-0 top-[3px] w-[18px] h-[19px] rounded-full bg-[#e8c3b4] border border-[#eee]" />
          <div className="absolute bottom-[2px] left-[14px] w-[8px] h-[4px] rounded-full bg-[#9a9a9a]" />
        </div>
        <div className="relative ml-[19px] w-[36px] h-[52px] flex items-center justify-center">
          <Paint />
          <div className="absolute bottom-[2px] left-[14px] w-[8px] h-[4px] rounded-full bg-[#9a9a9a]" />
        </div>
      </div>
      <div className="ml-auto flex items-center pr-[24px] shrink-0">
        <ChevronUp size={20} strokeWidth={1.800} />
        <Wifi size={20} strokeWidth={1.600} className="ml-[19px]" />
        <Volume2 size={20} strokeWidth={1.300} className="ml-[9px]" />
        <svg className="ml-[10px]" width="22" height="20" viewBox="0 0 22 20" fill="none" stroke="#fff" strokeWidth="1.300">
          <rect x="2" y="5" width="16" height="11" rx="2" />
          <path d="M18 8h2v5h-2" fill="#fff" />
          <path d="M7 1L5 6h4l-2 5" />
          <rect x="5" y="8" width="10" height="6" fill="#fff" stroke="none" />
        </svg>
        <div className="ml-[20px] text-right text-[14.500px] leading-[21px] text-[#f4f4f4] -mt-[1px]">
          <div>13:13</div>
          <div>12/06/2023</div>
        </div>
      </div>
    </div>
  );
}

export default function App() {
  return (
    <div className="w-[1920px] h-[1658px] bg-white overflow-hidden">
      <div className="h-[1080px] flex flex-col">
        <TopChrome />
        <div className="flex h-[931px]">
          <div className="relative w-[1831px] flex flex-col shrink-0">
            <Header />
            <Results />
            <div className="ml-[19px] w-[1793px] flex-1 min-h-0 border-x border-[#e3e5e8] overflow-hidden bg-white">
              <Wheel />
            </div>
            <Overlays />
          </div>
          <Scrollbar />
          <div className="w-px bg-[#bdbdbd]" />
          <Sidebar />
        </div>
        <Taskbar />
      </div>
    </div>
  );
}
